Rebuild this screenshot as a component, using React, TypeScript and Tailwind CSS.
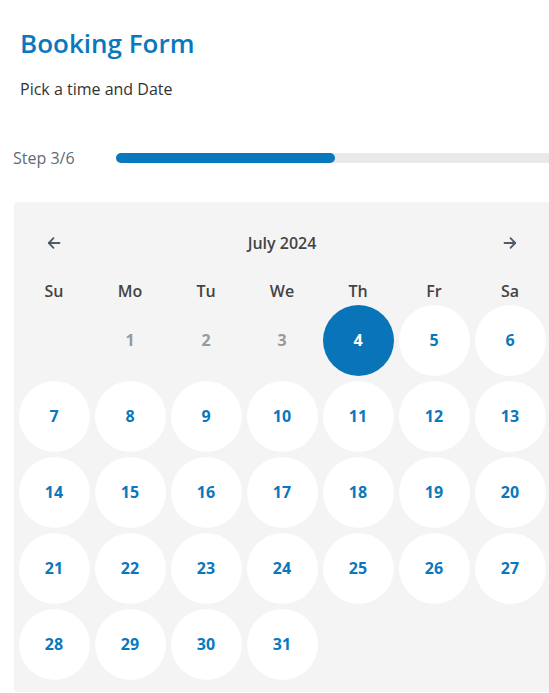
import React from "react";

const blue = "#0a78be";

function ArrowLeft() {
  return (
    <svg width="14" height="14" viewBox="0 0 14 14" fill="none" stroke="#4f5b66" strokeWidth="1.8" strokeLinecap="round" strokeLinejoin="round">
      <path d="M12.5 7H1.8" />
      <path d="M6.5 2.2L1.8 7l4.7 4.8" />
    </svg>
  );
}
function ArrowRight() {
  return (
    <svg width="14" height="14" viewBox="0 0 14 14" fill="none" stroke="#4f5b66" strokeWidth="1.8" strokeLinecap="round" strokeLinejoin="round">
      <path d="M1.5 7h10.7" />
      <path d="M7.5 2.2L12.2 7l-4.7 4.8" />
    </svg>
  );
}

export default function App() {
  const days = ["Su", "Mo", "Tu", "We", "Th", "Fr", "Sa"];
  const cells: (number | null)[] = [null];
  for (let i = 1; i <= 31; i++) cells.push(i);
  return (
    <div className="w-full overflow-hidden bg-white" style={{ fontFamily: '"Open Sans", "Noto Sans", sans-serif' }}>
      <div className="w-[600px]">
        <h1 className="ml-[20px] pt-[26px] text-[26px] leading-[34px] font-semibold text-[#0a78be]">Booking Form</h1>
        <p className="ml-[20px] mt-[17px] text-[16px] leading-6 text-[#333333]">Pick a time and Date</p>
        <div className="mt-[45px] flex items-center h-6">
          <span className="ml-[13px] w-[103px] text-[16px] leading-6 text-[#5f6a74]">Step 3/6</span>
          <div className="flex-1 h-[10px] rounded-full bg-[#e9e9e9]">
            <div className="h-[10px] w-[219px] rounded-full bg-[#0a78be]" />
          </div>
        </div>
        <div className="mt-[32px] ml-[14px] w-[560px] rounded-[4px] bg-[#f4f4f4] pl-[2px] pt-[25px] pb-[10px]">
          <div className="w-[532px]">
            <div className="grid grid-cols-7 h-8 items-center">
              <div className="flex justify-center"><ArrowLeft /></div>
              <div className="col-span-5 text-center text-[16px] font-semibold text-[#444444]">July 2024</div>
              <div className="flex justify-center"><ArrowRight /></div>
            </div>
            <div className="mt-[21px] grid grid-cols-7 h-[22px] items-center">
              {days.map((d) => (
                <div key={d} className="text-center text-[16px] leading-[22px] font-semibold text-[#444444]">{d}</div>
              ))}
            </div>
            <div className="grid grid-cols-7 auto-rows-[76px]">
              {cells.map((n, i) => (
                <div key={i} className="flex items-center justify-center">
                  {n === null ? null : n < 4 ? (
                    <span className="text-[16px] font-bold text-[#999999]">{n}</span>
                  ) : n === 4 ? (
                    <div className="w-[71px] h-[71px] rounded-full bg-[#0a74b8] flex items-center justify-center text-[16px] font-bold text-white">{n}</div>
                  ) : (
                    <div className="w-[71px] h-[71px] rounded-full bg-white flex items-center justify-center text-[16px] font-bold" style={{ color: blue }}>{n}</div>
                  )}
                </div>
              ))}
            </div>
          </div>
        </div>
      </div>
    </div>
  );
}
